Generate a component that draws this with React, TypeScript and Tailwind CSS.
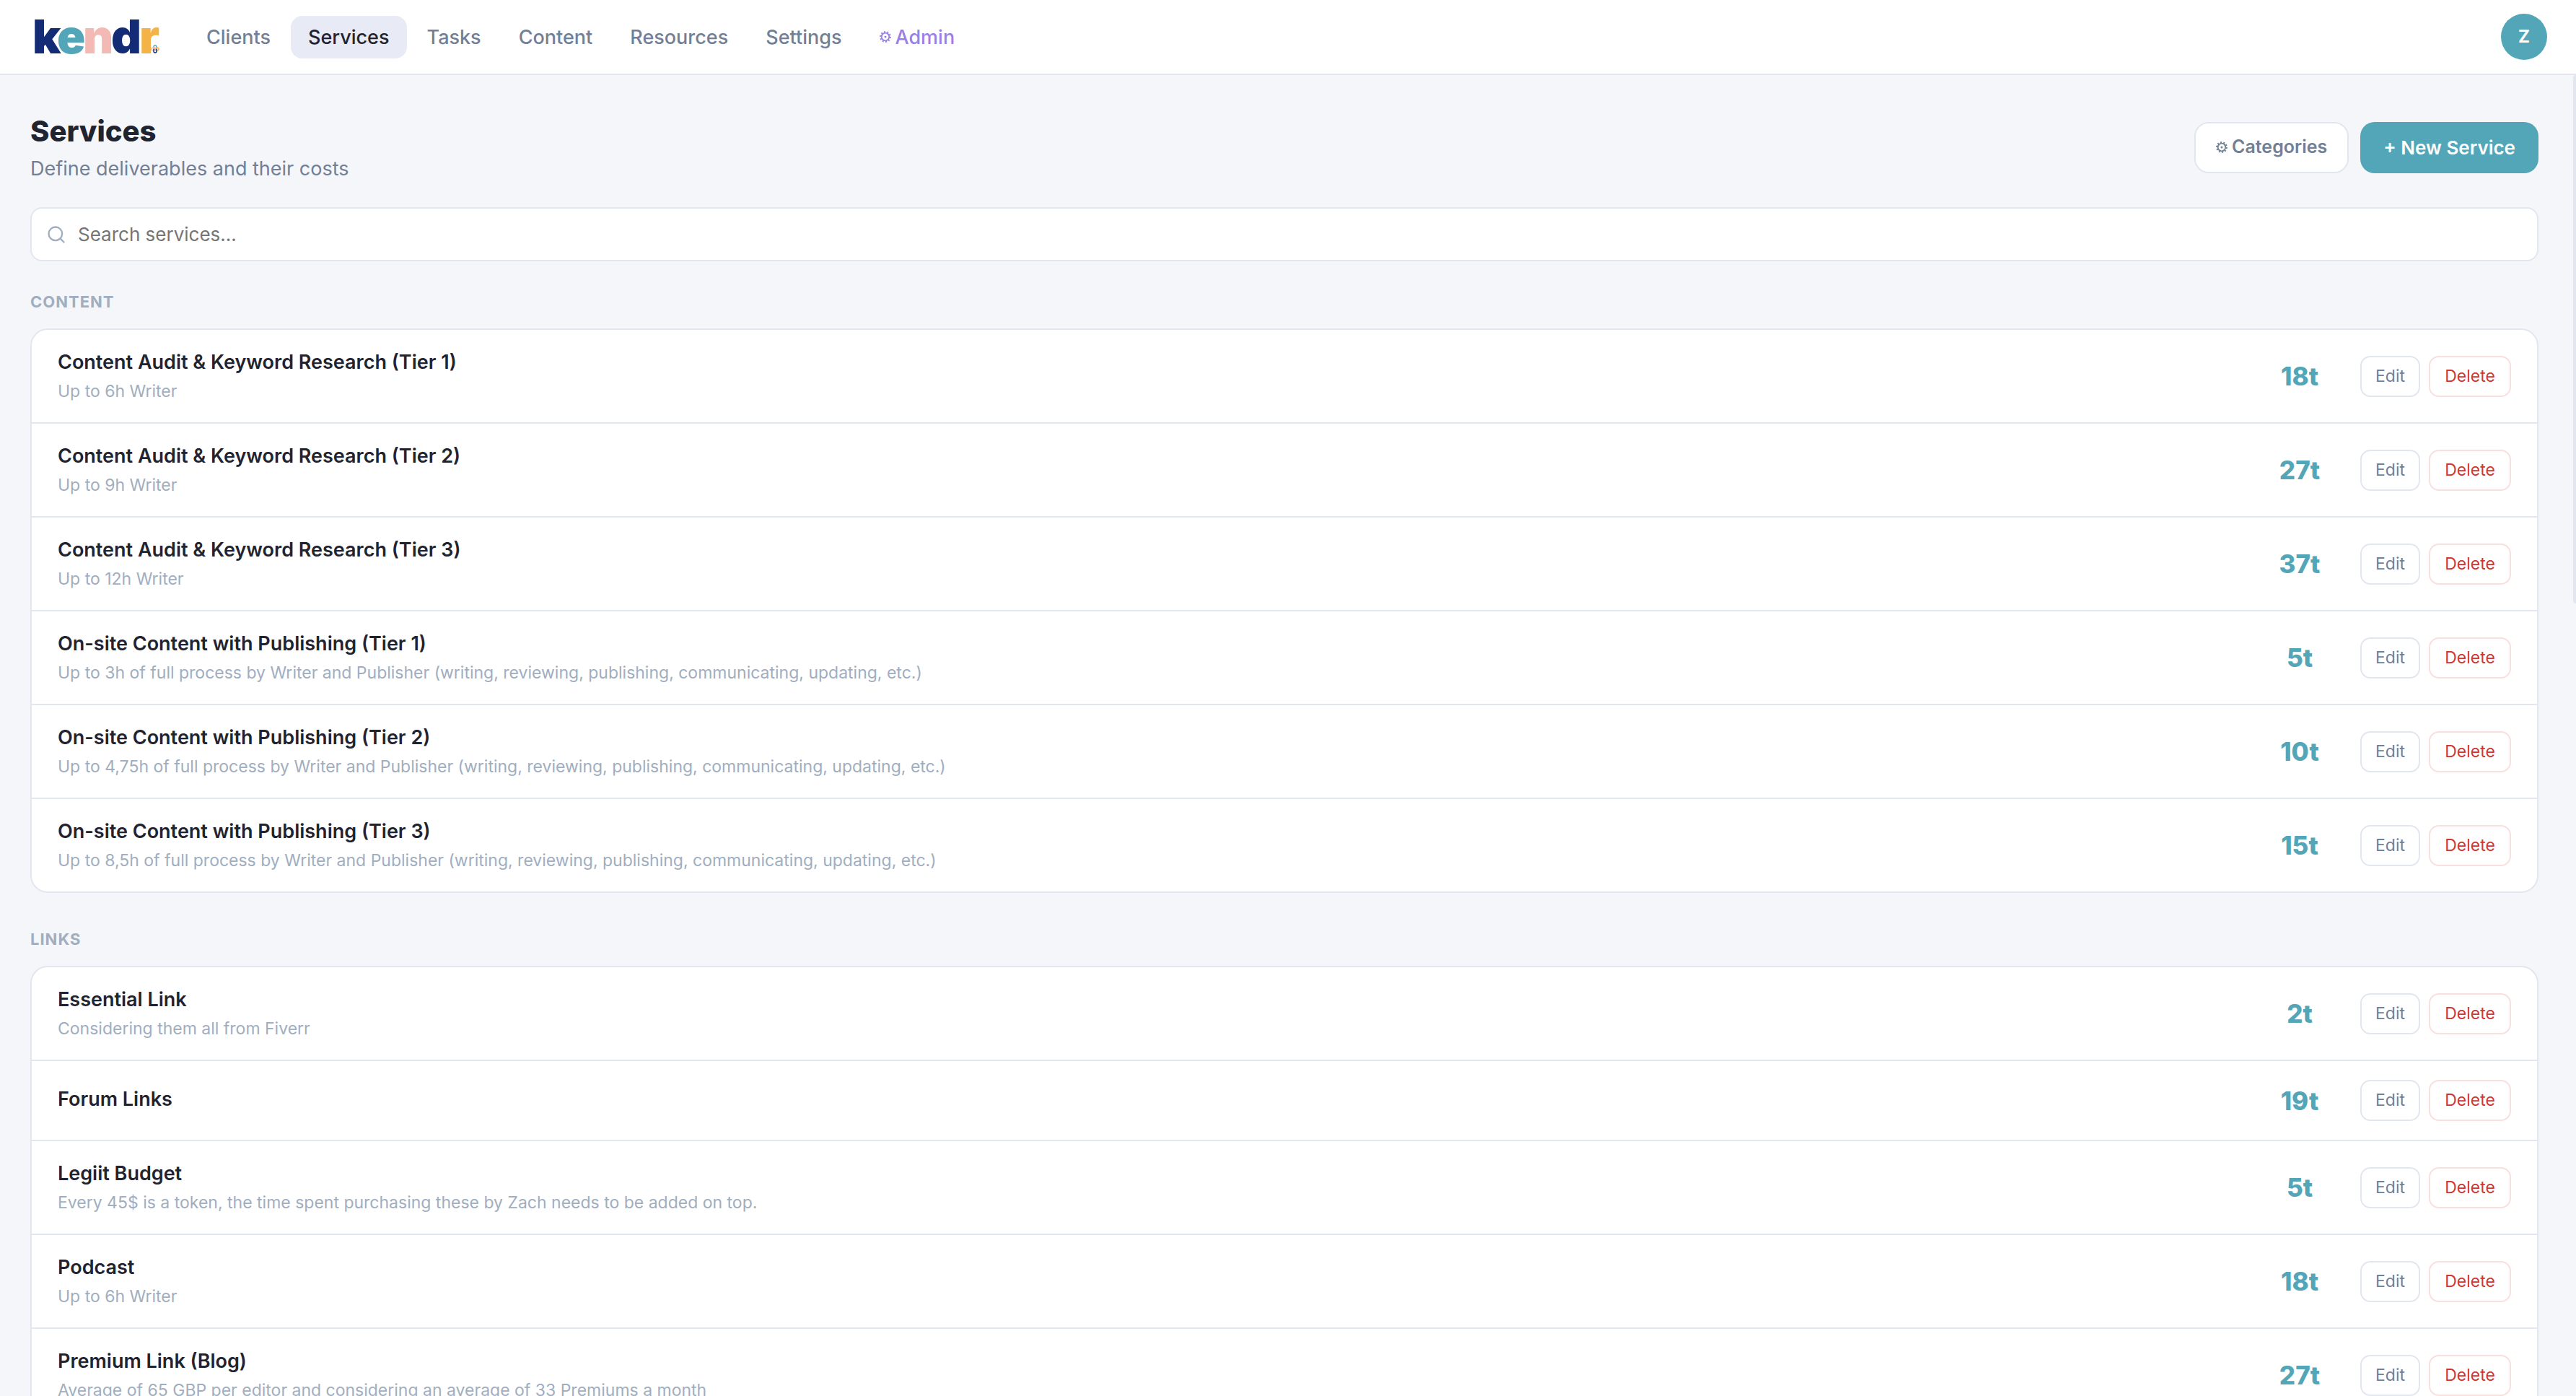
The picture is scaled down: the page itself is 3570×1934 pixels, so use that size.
import { useId } from "react";
import { Search } from "lucide-react";

type Service = { name: string; note?: string; tokens: number };
type Group = { title: string; services: Service[] };

const NAV = ["Clients", "Services", "Tasks", "Content", "Resources", "Settings"];

const GROUPS: Group[] = [
  {
    title: "Content",
    services: [
      { name: "Content Audit & Keyword Research (Tier 1)", note: "Up to 6h Writer", tokens: 18 },
      { name: "Content Audit & Keyword Research (Tier 2)", note: "Up to 9h Writer", tokens: 27 },
      { name: "Content Audit & Keyword Research (Tier 3)", note: "Up to 12h Writer", tokens: 37 },
      {
        name: "On-site Content with Publishing (Tier 1)",
        note: "Up to 3h of full process by Writer and Publisher (writing, reviewing, publishing, communicating, updating, etc.)",
        tokens: 5,
      },
      {
        name: "On-site Content with Publishing (Tier 2)",
        note: "Up to 4,75h of full process by Writer and Publisher (writing, reviewing, publishing, communicating, updating, etc.)",
        tokens: 10,
      },
      {
        name: "On-site Content with Publishing (Tier 3)",
        note: "Up to 8,5h of full process by Writer and Publisher (writing, reviewing, publishing, communicating, updating, etc.)",
        tokens: 15,
      },
    ],
  },
  {
    title: "Links",
    services: [
      { name: "Essential Link", note: "Considering them all from Fiverr", tokens: 2 },
      { name: "Forum Links", tokens: 19 },
      {
        name: "Legiit Budget",
        note: "Every 45$ is a token, the time spent purchasing these by Zach needs to be added on top.",
        tokens: 5,
      },
      { name: "Podcast", note: "Up to 6h Writer", tokens: 18 },
      {
        name: "Premium Link (Blog)",
        note: "Average of 65 GBP per editor and considering an average of 33 Premiums a month",
        tokens: 27,
      },
    ],
  },
];

function Logo() {
  return (
    <svg viewBox="0 0 184 84" className="h-[84px] w-[184px]" role="img" aria-label="kendr">
      <g fontFamily="Inter, sans-serif" fontWeight="900" fontSize="65">
        <text x="5" y="65" fill="#132c75">k</text>
        <text x="75" y="65" fill="#f3b9b5">n</text>
        <text x="114" y="65" fill="#132c75">d</text>
        <text x="39" y="65" fill="#53a6b8">e</text>
        <text x="153" y="65" fill="#f4b347">r</text>
      </g>
      <g fill="none" strokeWidth="1.4">
        <rect x="173" y="54" width="4" height="6" rx="2" stroke="#53a6b8" />
        <rect x="175" y="57" width="5" height="4" rx="2" stroke="#f4b347" />
        <rect x="170" y="57" width="5" height="4" rx="2" stroke="#f3b9b5" />
        <path d="M173 59v3a2 2 0 0 0 4 0v-3" stroke="#132c75" />
      </g>
    </svg>
  );
}

function Gear() {
  return (
    <svg viewBox="0 0 16 16" className="size-4 shrink-0" fill="none" stroke="currentColor" aria-hidden="true">
      <circle cx="8" cy="8" r="5.3" strokeWidth="1.8" />
      <circle cx="8" cy="8" r="6.9" strokeWidth="2" strokeDasharray="2 2.335" />
      <circle cx="8" cy="8" r="1.5" fill="currentColor" stroke="none" />
    </svg>
  );
}

function ServiceRow({ service }: { service: Service }) {
  return (
    <li className="flex items-center border-b-2 border-[#e2e6ef] px-9 py-[26px] last:border-b-0">
      <div className="min-w-0 flex-1">
        <h3 className="mb-1 text-[27px] leading-[38px] font-semibold text-[#1f2430]">{service.name}</h3>
        {service.note && <p className="text-[23px] leading-[34px] text-[#a0aec0]">{service.note}</p>}
      </div>
      <div className="w-28 text-center text-[35px] leading-[48px] font-extrabold text-[#53a6b8]">{service.tokens}t</div>
      <div className="ml-7 flex gap-3">
        <button className="h-[57px] w-[83px] rounded-[14px] border-2 border-[#e2e6ef] text-[23px] text-[#718096]">
          Edit
        </button>
        <button className="h-[57px] w-[114px] rounded-[14px] border-2 border-[#fadfdf] text-[23px] text-[#cf3733]">
          Delete
        </button>
      </div>
    </li>
  );
}

export default function App() {
  const searchId = useId();
  return (
    <div className="flex h-screen flex-col overflow-hidden bg-[#f5f6fa] font-['Inter',sans-serif] text-[#1f2430]">
      <header className="flex h-[104px] shrink-0 items-center border-b-2 border-[#e2e6ef] bg-white px-10">
        <a href="#home" className="mr-[38px]">
          <Logo />
        </a>
        <nav className="flex gap-1 text-[27px] leading-[35px] font-medium text-[#718096]">
          {NAV.map((item) => (
            <a
              key={item}
              href={`#${item.toLowerCase()}`}
              aria-current={item === "Services" ? "page" : undefined}
              className="rounded-2xl px-6 py-3 aria-[current=page]:bg-[#e8ebf5] aria-[current=page]:text-[#1f2430]"
            >
              {item}
            </a>
          ))}
          <a href="#admin" className="flex items-center gap-1.5 rounded-2xl px-6 py-3 text-[#9a7fe8]">
            <Gear />
            Admin
          </a>
        </nav>
        <button className="ml-auto size-16 rounded-full bg-[#53a6b8] text-[24px] font-bold text-white">Z</button>
      </header>

      <div className="flex min-h-0 flex-1">
        <main className="min-w-0 flex-1 overflow-hidden pt-[52px] pr-12 pl-[42px]">
          <div className="flex items-center justify-between">
            <div>
              <h1 className="text-[40px] leading-[52px] font-extrabold">Services</h1>
              <p className="mt-2 text-[27px] leading-[36px] text-[#718096]">Define deliverables and their costs</p>
            </div>
            <div className="flex gap-4">
              <button className="flex h-[71px] items-center gap-1.5 rounded-[20px] border-2 border-[#e2e6ef] bg-white px-7 text-[25px] font-semibold text-[#718096]">
                <Gear />
                Categories
              </button>
              <button className="h-[71px] rounded-[20px] bg-[#53a6b8] px-8 text-[26px] font-semibold text-white">
                + New Service
              </button>
            </div>
          </div>

          <label
            htmlFor={searchId}
            className="mt-[35px] flex h-[75px] items-center gap-4 rounded-2xl border-2 border-[#e2e6ef] bg-white px-5 text-[#a0aec0]"
          >
            <Search className="size-7" strokeWidth={2} aria-hidden="true" />
            <input
              id={searchId}
              type="text"
              aria-label="Search services"
              placeholder="Search services…"
              className="min-w-0 flex-1 bg-transparent text-[26px] text-[#1f2430] outline-none placeholder:text-[#757575]"
            />
          </label>

          {GROUPS.map((group) => (
            <section key={group.title} className="mt-12 first-of-type:mt-10">
              <h2 className="mb-5 text-[22px] leading-[33px] font-bold tracking-[1px] text-[#a0aec0] uppercase">
                {group.title}
              </h2>
              <ul className="rounded-3xl border-2 border-[#e2e6ef] bg-white">
                {group.services.map((service) => (
                  <ServiceRow key={service.name} service={service} />
                ))}
              </ul>
            </section>
          ))}
        </main>
        <div className="w-1 shrink-0">
          <div className="h-2/5 rounded-l bg-[#e2e6ef]" />
        </div>
      </div>
    </div>
  );
}
